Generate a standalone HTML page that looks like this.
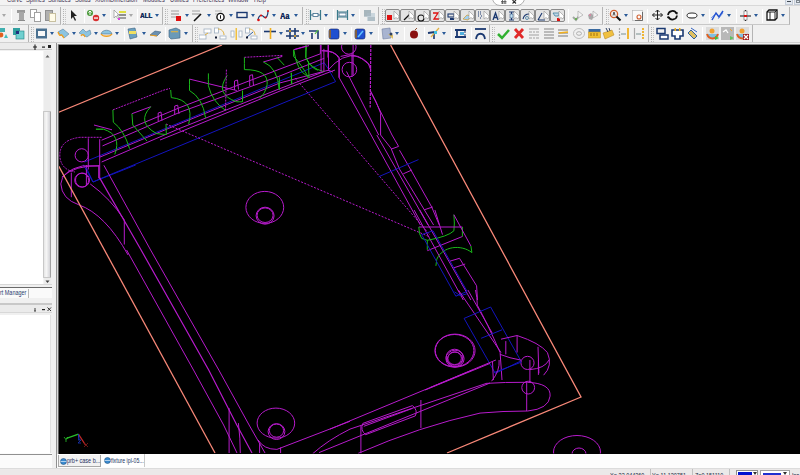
<!DOCTYPE html><html><head><meta charset="utf-8"><style>
*{margin:0;padding:0;box-sizing:border-box}
html,body{width:800px;height:475px;overflow:hidden}
body{position:relative;background:#f0f0f0;font-family:"Liberation Sans",sans-serif}
.a{position:absolute}
.sep{position:absolute;width:1px;background:#c8c8c8;border-right:1px solid #fff}
.tb{position:absolute;background:#f0f0f0;border-bottom:1px solid #c8c8c8}
.grip{position:absolute;width:4px;background-image:linear-gradient(#f0f0f0 50%,transparent 50%),linear-gradient(90deg,#b4b4b4 1px,transparent 1px,transparent 2px,#c4c4c4 2px,#c4c4c4 3px,transparent 3px);background-size:4px 2px,4px 2px}
.arr{position:absolute;width:0;height:0;border-left:2.5px solid transparent;border-right:2.5px solid transparent;border-top:3.5px solid #2a5a98}
.arrg{position:absolute;width:0;height:0;border-left:2.5px solid transparent;border-right:2.5px solid transparent;border-top:3.5px solid #a8a8a8}
.pb{position:absolute;top:9px;width:15px;height:13px;border:1px solid #8a8a8a;border-radius:2px;background:#e4e4e4}
</style></head><body>
<div class="a" style="left:0;top:0;width:800px;height:6px;background:#f3f3f3;border-bottom:1px solid #d8d8d8"></div>
<div class="a" style="left:0;top:0;width:800px;height:6px;overflow:hidden">
<div class="a" style="left:-3px;top:-5px;font-size:8px;line-height:9px;color:#3c3050;white-space:nowrap;transform:scaleX(0.72);transform-origin:0 0">r</div>
<div class="a" style="left:7px;top:-5px;font-size:8px;line-height:9px;color:#3c3050;white-space:nowrap;transform:scaleX(0.72);transform-origin:0 0">Curve</div>
<div class="a" style="left:26px;top:-5px;font-size:8px;line-height:9px;color:#3c3050;white-space:nowrap;transform:scaleX(0.72);transform-origin:0 0">Splines</div>
<div class="a" style="left:48px;top:-5px;font-size:8px;line-height:9px;color:#3c3050;white-space:nowrap;transform:scaleX(0.72);transform-origin:0 0">Surfaces</div>
<div class="a" style="left:75px;top:-5px;font-size:8px;line-height:9px;color:#3c3050;white-space:nowrap;transform:scaleX(0.72);transform-origin:0 0">Solids</div>
<div class="a" style="left:95px;top:-5px;font-size:8px;line-height:9px;color:#3c3050;white-space:nowrap;transform:scaleX(0.72);transform-origin:0 0">Xform</div>
<div class="a" style="left:110px;top:-5px;font-size:8px;line-height:9px;color:#3c3050;white-space:nowrap;transform:scaleX(0.72);transform-origin:0 0">Dimension</div>
<div class="a" style="left:143px;top:-5px;font-size:8px;line-height:9px;color:#3c3050;white-space:nowrap;transform:scaleX(0.72);transform-origin:0 0">Modules</div>
<div class="a" style="left:170px;top:-5px;font-size:8px;line-height:9px;color:#3c3050;white-space:nowrap;transform:scaleX(0.72);transform-origin:0 0">Utilities</div>
<div class="a" style="left:193px;top:-5px;font-size:8px;line-height:9px;color:#3c3050;white-space:nowrap;transform:scaleX(0.72);transform-origin:0 0">Preferences</div>
<div class="a" style="left:228px;top:-5px;font-size:8px;line-height:9px;color:#3c3050;white-space:nowrap;transform:scaleX(0.72);transform-origin:0 0">Window</div>
<div class="a" style="left:254px;top:-5px;font-size:8px;line-height:9px;color:#3c3050;white-space:nowrap;transform:scaleX(0.72);transform-origin:0 0">Help</div>
</div>
<div class="a" style="left:785px;top:-1px;width:8px;height:6px;background:#e2e8f0;border:1px solid #c4ccd8"></div>
<div class="a" style="left:787px;top:1px;width:4px;height:1px;background:#404850"></div>
<div class="a" style="left:794px;top:-1px;width:8px;height:6px;background:#e2e8f0;border:1px solid #c4ccd8"></div>
<div class="a" style="left:796px;top:0px;width:4px;height:3px;border:1px solid #808890"></div>
<div class="a" style="left:492px;top:-6px;width:33px;height:12px;background:#fff;border:1px solid #b0b0b0;border-radius:0 0 8px 8px"></div>
<svg class="a" style="left:500px;top:0px" width="20" height="6" viewBox="0 0 20 6"><path d="M2.5 0 V4 M5 0 V4 M1 1.5 H6.5 M1 3 H6.5" stroke="#505050" stroke-width="0.8"/><path d="M12.5 0 L16 3.5 M16 0 L12.5 3.5" stroke="#303030" stroke-width="1.1"/></svg>
<div class="tb" style="left:0px;top:7px;width:61px;height:18px;border-right:1px solid #b4b4b4"></div>
<div class="tb" style="left:62px;top:7px;width:101px;height:18px;border-right:1px solid #b4b4b4"></div>
<div class="tb" style="left:164px;top:7px;width:139px;height:18px;border-right:1px solid #b4b4b4"></div>
<div class="tb" style="left:304px;top:7px;width:75px;height:18px;border-right:1px solid #b4b4b4"></div>
<div class="tb" style="left:380px;top:7px;width:223px;height:18px;border-right:1px solid #b4b4b4"></div>
<div class="tb" style="left:604px;top:7px;width:186px;height:18px;border-right:1px solid #b4b4b4"></div>
<div class="tb" style="left:0px;top:25px;width:29px;height:18px;border-right:1px solid #b4b4b4"></div>
<div class="tb" style="left:30px;top:25px;width:163px;height:18px;border-right:1px solid #b4b4b4"></div>
<div class="tb" style="left:194px;top:25px;width:296px;height:18px;border-right:1px solid #b4b4b4"></div>
<div class="tb" style="left:491px;top:25px;width:158px;height:18px;border-right:1px solid #b4b4b4"></div>
<div class="tb" style="left:650px;top:25px;width:103px;height:18px;border-right:1px solid #b4b4b4"></div>
<div class="grip" style="left:63px;top:8px;height:16px"></div>
<div class="grip" style="left:165px;top:8px;height:16px"></div>
<div class="grip" style="left:306px;top:8px;height:16px"></div>
<div class="grip" style="left:382px;top:8px;height:16px"></div>
<div class="grip" style="left:606px;top:8px;height:16px"></div>
<div class="grip" style="left:31px;top:26px;height:16px"></div>
<div class="grip" style="left:195px;top:26px;height:16px"></div>
<div class="grip" style="left:492px;top:26px;height:16px"></div>
<div class="grip" style="left:651px;top:26px;height:16px"></div>
<div class="sep" style="left:11px;top:9px;height:14px"></div>
<div class="sep" style="left:84px;top:9px;height:14px"></div>
<div class="sep" style="left:110px;top:9px;height:14px"></div>
<div class="sep" style="left:137px;top:9px;height:14px"></div>
<div class="sep" style="left:333px;top:9px;height:14px"></div>
<div class="sep" style="left:359px;top:9px;height:14px"></div>
<div class="sep" style="left:647px;top:9px;height:14px"></div>
<div class="sep" style="left:682px;top:9px;height:14px"></div>
<div class="sep" style="left:709px;top:9px;height:14px"></div>
<div class="sep" style="left:736px;top:9px;height:14px"></div>
<div class="sep" style="left:762px;top:9px;height:14px"></div>
<div class="sep" style="left:124px;top:27px;height:14px"></div>
<div class="sep" style="left:165px;top:27px;height:14px"></div>
<div class="sep" style="left:261px;top:27px;height:14px"></div>
<div class="sep" style="left:324px;top:27px;height:14px"></div>
<div class="sep" style="left:351px;top:27px;height:14px"></div>
<div class="sep" style="left:378px;top:27px;height:14px"></div>
<div class="sep" style="left:404px;top:27px;height:14px"></div>
<div class="sep" style="left:424px;top:27px;height:14px"></div>
<div class="sep" style="left:451px;top:27px;height:14px"></div>
<div class="sep" style="left:471px;top:27px;height:14px"></div>
<div class="sep" style="left:568px;top:9px;height:14px"></div>
<div class="sep" style="left:702px;top:27px;height:14px"></div>
<div class="arrg" style="left:2.0px;top:14px"></div>
<svg class="a" style="left:16px;top:9px;" width="10" height="13" viewBox="0 0 10 13"><rect x="1" y="1" width="8" height="3" fill="#9a9a9a"/><rect x="3" y="3" width="5" height="9" fill="#a8a8a8"/><rect x="2" y="11" width="7" height="1" fill="#8a8a8a"/></svg>
<svg class="a" style="left:30px;top:9px;" width="11" height="13" viewBox="0 0 11 13"><rect x="0.5" y="0.5" width="6" height="8" fill="#fff" stroke="#a0a0a0"/><rect x="4.5" y="3.5" width="6" height="9" fill="#fff" stroke="#a0a0a0"/></svg>
<svg class="a" style="left:45px;top:9px;" width="11" height="13" viewBox="0 0 11 13"><rect x="0.5" y="1.5" width="7" height="10" fill="#b0b0b0" stroke="#909090"/><rect x="4.5" y="4.5" width="6" height="8" fill="#fffbe8" stroke="#c8c0a0"/></svg>
<svg class="a" style="left:70px;top:10px;" width="8" height="11" viewBox="0 0 8 11"><path d="M1 0 L1 9 L3 7 L5 11 L6 10 L4 6 L7 6 Z" fill="#202020"/></svg>
<svg class="a" style="left:86px;top:9px;" width="14" height="13" viewBox="0 0 14 13"><circle cx="4" cy="4" r="3" fill="#4a9a3a"/><path d="M4 2 L4 6 M2.5 3.5 L4 2 L5.5 3.5" stroke="#fff" fill="none"/><circle cx="10" cy="9" r="3.2" fill="#d83030"/><rect x="8" y="8.4" width="4" height="1.3" fill="#fff"/></svg>
<div class="arr" style="left:102.0px;top:14px"></div>
<svg class="a" style="left:113px;top:9px;" width="14" height="13" viewBox="0 0 14 13"><path d="M1 1 L1 9 L3 7 L5 10 L6 9 L4 6 L6 6 Z" fill="#fff" stroke="#808080" stroke-width="0.6"/><rect x="6" y="2" width="7" height="2" fill="#e0e040"/><rect x="6" y="5" width="7" height="2" fill="#909090"/><rect x="6" y="8" width="7" height="2" fill="#a0a0a0"/><rect x="5" y="9" width="2" height="2" fill="#e040e0"/></svg>
<div class="arrg" style="left:128.5px;top:14px"></div>
<div class="a" style="left:140px;top:11px;font-size:8px;line-height:10px;font-weight:bold;color:#10285a;text-shadow:0.4px 0 0 #10285a;transform:scaleX(0.78);transform-origin:0 0">ALL</div>
<div class="arr" style="left:155.0px;top:14px"></div>
<svg class="a" style="left:170px;top:9px;" width="13" height="13" viewBox="0 0 13 13"><rect x="1" y="1" width="8" height="2" fill="#c8c8c8"/><rect x="1" y="4" width="8" height="2" fill="#c0c0c0"/><rect x="1" y="7" width="8" height="2" fill="#c8c8c8"/><rect x="6" y="7" width="5" height="5" fill="#e01010"/></svg>
<div class="arr" style="left:185.0px;top:14px"></div>
<svg class="a" style="left:192px;top:9px;" width="10" height="13" viewBox="0 0 10 13"><rect x="0" y="1" width="8" height="2" fill="#c8c8c8"/><rect x="0" y="4" width="8" height="2" fill="#c0c0c0"/><path d="M2 12 L9 5" stroke="#101010" stroke-width="1.6"/></svg>
<div class="arr" style="left:206.5px;top:14px"></div>
<svg class="a" style="left:214px;top:9px;" width="12" height="13" viewBox="0 0 12 13"><rect x="1" y="1" width="7" height="2" fill="#d0d0d0"/><rect x="1" y="4" width="7" height="2" fill="#d0d0d0"/><circle cx="6.5" cy="8" r="3.6" fill="#fff" stroke="#101010" stroke-width="1.4"/><path d="M6.5 6.3 L6.5 9.7" stroke="#101010"/></svg>
<div class="arr" style="left:228.5px;top:14px"></div>
<svg class="a" style="left:236px;top:10px;" width="12" height="11" viewBox="0 0 12 11"><rect x="1" y="2.5" width="10" height="5" fill="none" stroke="#1a3870" stroke-width="1.4"/></svg>
<div class="arr" style="left:250.5px;top:14px"></div>
<svg class="a" style="left:257px;top:9px;" width="13" height="13" viewBox="0 0 13 13"><path d="M1 11 C2 5 5 6 7 8 C9 10 11 7 11 2" stroke="#1a3870" stroke-width="1.2" fill="none"/><circle cx="1.5" cy="11" r="1.3" fill="#e01010"/><circle cx="4" cy="6.5" r="1.1" fill="#e01010"/><circle cx="8.5" cy="8.5" r="1.1" fill="#e01010"/><circle cx="11" cy="2" r="1.1" fill="#e01010"/></svg>
<div class="arr" style="left:272.0px;top:14px"></div>
<div class="a" style="left:280px;top:11px;font-size:8.5px;line-height:10px;font-weight:bold;color:#10285a;text-shadow:0.4px 0 0 #10285a;transform:scaleX(0.85);transform-origin:0 0">Aa</div>
<div class="arr" style="left:294.0px;top:14px"></div>
<svg class="a" style="left:309px;top:9px;" width="13" height="13" viewBox="0 0 13 13"><path d="M1.5 1 L1.5 11 M11.5 1 L11.5 11" stroke="#3a7a8a" stroke-width="1.2"/><rect x="4" y="4.5" width="5" height="3" fill="#fff" stroke="#3a6a8a" stroke-width="0.8"/><path d="M1.5 6 L4 6 M9 6 L11.5 6" stroke="#3a6a8a"/></svg>
<div class="arr" style="left:324.0px;top:14px"></div>
<svg class="a" style="left:336px;top:9px;" width="13" height="13" viewBox="0 0 13 13"><path d="M1.5 1 L1.5 11 M11.5 1 L11.5 11 M1.5 3 L11.5 3 M1.5 8 L11.5 8" stroke="#3a7a8a" stroke-width="1.2"/><rect x="3" y="4" width="7" height="3" fill="#fff" stroke="#3a6a8a" stroke-width="0.8"/></svg>
<div class="arr" style="left:351.0px;top:14px"></div>
<svg class="a" style="left:363px;top:9px;" width="13" height="13" viewBox="0 0 13 13"><rect x="1" y="1" width="7" height="7" fill="#a8b8c0" opacity="0.7"/><rect x="4" y="4" width="8" height="8" fill="#c0d0d8" opacity="0.8"/><path d="M1 2h7M1 4h7M1 6h7M5 9h7M5 11h7" stroke="#708890" stroke-width="0.6"/></svg>
<div class="pb" style="left:385px"></div>
<svg class="a" style="left:386px;top:10px;" width="14" height="12" viewBox="0 0 14 12"><rect x="1" y="5" width="5" height="5" fill="#e01010"/><path d="M8 1 L8 9 L10 7.5 L12 9 L13 6 Z" fill="#fff" stroke="#909090" stroke-width="0.6"/></svg>
<div class="pb" style="left:400px"></div>
<svg class="a" style="left:401px;top:10px;" width="14" height="12" viewBox="0 0 14 12"><path d="M3 10 L9 4" stroke="#101010" stroke-width="1.3"/><path d="M8 1 L8 9 L10 7.5 L12 9 L13 6 Z" fill="#fff" stroke="#909090" stroke-width="0.6"/></svg>
<div class="pb" style="left:415px"></div>
<svg class="a" style="left:416px;top:10px;" width="14" height="12" viewBox="0 0 14 12"><circle cx="5" cy="8" r="3" fill="none" stroke="#101010" stroke-width="1.1"/><path d="M8 1 L8 9 L10 7.5 L12 9 L13 6 Z" fill="#fff" stroke="#909090" stroke-width="0.6"/></svg>
<div class="pb" style="left:430px"></div>
<svg class="a" style="left:431px;top:10px;" width="14" height="12" viewBox="0 0 14 12"><path d="M2 3 L7 3 L3 9 L8 9" stroke="#e01010" stroke-width="1.3" fill="none"/><path d="M8 1 L8 9 L10 7.5 L12 9 L13 6 Z" fill="#fff" stroke="#909090" stroke-width="0.6"/></svg>
<div class="pb" style="left:445px"></div>
<svg class="a" style="left:446px;top:10px;" width="14" height="12" viewBox="0 0 14 12"><rect x="2" y="4" width="6" height="3" fill="none" stroke="#1a3870" stroke-width="1.1"/><rect x="4" y="8" width="4" height="2" fill="#1a3870"/><path d="M8 1 L8 9 L10 7.5 L12 9 L13 6 Z" fill="#fff" stroke="#909090" stroke-width="0.6"/></svg>
<div class="pb" style="left:460px"></div>
<svg class="a" style="left:461px;top:10px;" width="14" height="12" viewBox="0 0 14 12"><path d="M2 9 L6 5 L10 6 L7 10 Z" fill="#a0d0f0" stroke="#d0a040" stroke-width="0.8"/><path d="M8 1 L8 9 L10 7.5 L12 9 L13 6 Z" fill="#fff" stroke="#909090" stroke-width="0.6"/></svg>
<div class="pb" style="left:475px"></div>
<svg class="a" style="left:476px;top:10px;" width="14" height="12" viewBox="0 0 14 12"><path d="M2 2h1M4 2h1M2 4h1M4 4h1M2 6h1M5 6h1M4 8h1" stroke="#1a3870" stroke-width="1.1"/><path d="M8 1 L8 9 L10 7.5 L12 9 L13 6 Z" fill="#fff" stroke="#909090" stroke-width="0.6"/></svg>
<div class="pb" style="left:490px"></div>
<svg class="a" style="left:491px;top:10px;" width="14" height="12" viewBox="0 0 14 12"><path d="M2 10 L4.5 3 L7 10 M3 7.5 L6 7.5" stroke="#1a3870" stroke-width="1.3" fill="none"/><path d="M8 1 L8 9 L10 7.5 L12 9 L13 6 Z" fill="#fff" stroke="#909090" stroke-width="0.6"/></svg>
<div class="pb" style="left:505px"></div>
<svg class="a" style="left:506px;top:10px;" width="14" height="12" viewBox="0 0 14 12"><path d="M3 2h5M5.5 2v8M3 10h5" stroke="#1a3870" stroke-width="1.1"/><rect x="4" y="4" width="3" height="4" fill="#c0e0f0" stroke="#1a3870" stroke-width="0.5"/><path d="M8 1 L8 9 L10 7.5 L12 9 L13 6 Z" fill="#fff" stroke="#909090" stroke-width="0.6"/></svg>
<div class="pb" style="left:520px"></div>
<svg class="a" style="left:521px;top:10px;" width="14" height="12" viewBox="0 0 14 12"><path d="M2 9 C3 5 6 4 8 4" stroke="#1a3870" stroke-width="1.1" fill="none"/><circle cx="6" cy="8" r="1.5" fill="none" stroke="#6090b0"/><path d="M8 1 L8 9 L10 7.5 L12 9 L13 6 Z" fill="#fff" stroke="#909090" stroke-width="0.6"/></svg>
<div class="pb" style="left:535px"></div>
<svg class="a" style="left:536px;top:10px;" width="14" height="12" viewBox="0 0 14 12"><path d="M2 10 L6 3 M2 10 L9 10" stroke="#1a3870" stroke-width="1.1" fill="none"/><path d="M8 1 L8 9 L10 7.5 L12 9 L13 6 Z" fill="#fff" stroke="#909090" stroke-width="0.6"/></svg>
<div class="pb" style="left:550px"></div>
<svg class="a" style="left:551px;top:10px;" width="14" height="12" viewBox="0 0 14 12"><path d="M2 3 L9 3 L7 6 L4 6 Z" fill="#c0d8e8" stroke="#4080a0" stroke-width="0.8"/><rect x="6" y="8" width="3" height="3" fill="#e01010"/><path d="M8 1 L8 9 L10 7.5 L12 9 L13 6 Z" fill="#fff" stroke="#909090" stroke-width="0.6"/></svg>
<svg class="a" style="left:572px;top:9px;" width="12" height="13" viewBox="0 0 12 13"><path d="M1 8 L4 11 L7 7" stroke="#a0a8a0" stroke-width="2" fill="none"/><circle cx="4" cy="10" r="1" fill="#5ab040"/><path d="M6 2 L6 9 L11 6 Z" fill="#f4f4f4" stroke="#a0a0a0" stroke-width="0.6"/></svg>
<svg class="a" style="left:587px;top:9px;" width="12" height="13" viewBox="0 0 12 13"><path d="M1 6 L4 4 L7 7 L5 11 L2 10 Z" fill="#a8a8a8"/><circle cx="3" cy="6" r="1" fill="#e080a0"/><path d="M6 2 L6 9 L11 6 Z" fill="#f4f4f4" stroke="#a0a0a0" stroke-width="0.6"/></svg>
<svg class="a" style="left:609px;top:9px;" width="13" height="13" viewBox="0 0 13 13"><circle cx="5" cy="5" r="3.6" fill="#f0f0f0" stroke="#d06030" stroke-width="1.3"/><path d="M7.5 7.5 L11.5 11.5" stroke="#101010" stroke-width="2"/><path d="M4 6.5 L5 3 L6 6.5" stroke="#303030" stroke-width="0.8" fill="none"/></svg>
<div class="arr" style="left:623.5px;top:14px"></div>
<svg class="a" style="left:632px;top:9px;" width="12" height="13" viewBox="0 0 12 13"><rect x="0.5" y="1.5" width="10" height="10" fill="#fafafa" stroke="#b0b0b0" stroke-width="0.6"/><path d="M10.5 3 L10.5 11.5 L3 11.5" stroke="#505050" stroke-width="0.8" fill="none"/><circle cx="7" cy="8" r="2" fill="none" stroke="#d06030" stroke-width="1.1"/></svg>
<svg class="a" style="left:652px;top:9px;" width="11" height="13" viewBox="0 0 11 13"><path d="M5.5 1 L5.5 11 M0.5 6 L10.5 6" stroke="#202020" stroke-width="1"/><path d="M3.5 3 L5.5 1 L7.5 3 M3.5 9 L5.5 11 L7.5 9 M2.5 4 L0.5 6 L2.5 8 M8.5 4 L10.5 6 L8.5 8" stroke="#202020" stroke-width="1" fill="none"/></svg>
<svg class="a" style="left:666px;top:9px;" width="13" height="13" viewBox="0 0 13 13"><path d="M2 6 A4.5 4.5 0 0 1 10.5 4.5" stroke="#101010" stroke-width="1.7" fill="none"/><path d="M11 6.5 A4.5 4.5 0 0 1 2.5 8" stroke="#101010" stroke-width="1.7" fill="none"/><path d="M9 3 L12 3.5 L11 6 Z M4 9.5 L1 9 L2 6.5 Z" fill="#101010"/></svg>
<svg class="a" style="left:686px;top:9px;" width="12" height="13" viewBox="0 0 12 13"><ellipse cx="6" cy="6.5" rx="5" ry="2.5" fill="#fff" stroke="#101010" stroke-width="0.9"/><path d="M3 9 L9 9" stroke="#606060" stroke-width="0.5"/></svg>
<div class="arr" style="left:700.5px;top:14px"></div>
<svg class="a" style="left:711px;top:9px;" width="13" height="13" viewBox="0 0 13 13"><path d="M1 11 L5 4 L8 8 L12 2" stroke="#2050d0" stroke-width="1.5" fill="none"/><path d="M0 9 L4 5 M7 10 L12 4" stroke="#4070e0" stroke-width="0.6"/></svg>
<div class="arr" style="left:727.0px;top:14px"></div>
<svg class="a" style="left:739px;top:9px;" width="13" height="13" viewBox="0 0 13 13"><path d="M6.5 1 L6.5 12 M1 7 L12 7" stroke="#101010" stroke-width="1.2"/><rect x="5" y="2" width="3" height="9" fill="#fff" stroke="#606060" stroke-width="0.6"/><rect x="5" y="6" width="3" height="2" fill="#e01010"/></svg>
<div class="arr" style="left:754.0px;top:14px"></div>
<svg class="a" style="left:765px;top:9px;" width="13" height="13" viewBox="0 0 13 13"><path d="M2 3 L4 1 L12 1 L12 9 L10 11 L2 11 Z" fill="#fff" stroke="#101010" stroke-width="1.3"/><path d="M2 3 L10 3 L10 11 M10 3 L12 1 M5 3 L5 11" stroke="#101010" stroke-width="0.9" fill="none"/></svg>
<div class="arr" style="left:780.5px;top:14px"></div>
<svg class="a" style="left:0px;top:27px;" width="9" height="13" viewBox="0 0 9 13"><rect x="0" y="1" width="5" height="4" fill="#40b0b0"/><circle cx="1" cy="8" r="2.4" fill="#e06020"/><path d="M4 11 L6 7 L8 11 Z" fill="#40c0c0"/></svg>
<svg class="a" style="left:12px;top:27px;" width="13" height="13" viewBox="0 0 13 13"><rect x="1" y="1" width="7" height="7" fill="#30a0a0"/><rect x="4" y="4" width="8" height="8" fill="#70d0d0" stroke="#208080" stroke-width="0.6"/><rect x="4" y="4" width="3" height="3" fill="#203080"/></svg>
<svg class="a" style="left:35px;top:27px;" width="13" height="13" viewBox="0 0 13 13"><rect x="1" y="1.5" width="11" height="10" fill="#4a7090"/><rect x="3" y="4" width="7" height="5" fill="#f8f8f8"/></svg>
<div class="arr" style="left:50.0px;top:32px"></div>
<svg class="a" style="left:57px;top:27px;" width="13" height="13" viewBox="0 0 13 13"><path d="M1 5 L6 2 L12 7 L7 11 Z" fill="#8cc4e0" stroke="#4a7090" stroke-width="0.5"/><path d="M1 5 C2 8 3 9 4 8 C5 7 6 10 7 11" stroke="#f0a020" stroke-width="1.3" fill="none"/></svg>
<div class="arr" style="left:71.5px;top:32px"></div>
<svg class="a" style="left:78px;top:27px;" width="14" height="13" viewBox="0 0 14 13"><path d="M1 6 L5 2 L8 5 L12 3 L13 7 L9 10 Z" fill="#8cc4e0" stroke="#4a7090" stroke-width="0.5"/><path d="M3 9 C4 7 6 7 7 10" stroke="#f0a020" stroke-width="1.3" fill="none"/></svg>
<div class="arr" style="left:93.5px;top:32px"></div>
<svg class="a" style="left:100px;top:27px;" width="13" height="13" viewBox="0 0 13 13"><path d="M1 7 C2 2 11 2 12 7 Z" fill="#8cc4e0" stroke="#4a7090" stroke-width="0.6"/><path d="M1 7 C3 10 10 10 12 7" stroke="#f0a020" stroke-width="1.3" fill="none"/></svg>
<div class="arr" style="left:115.0px;top:32px"></div>
<svg class="a" style="left:127px;top:27px;" width="12" height="13" viewBox="0 0 12 13"><path d="M1 2 L8 1 L10 10 L3 12 Z" fill="#6aa0c0" stroke="#3a6080" stroke-width="0.6"/><rect x="2" y="4" width="7" height="3" fill="#f0e060"/></svg>
<div class="arr" style="left:142.0px;top:32px"></div>
<svg class="a" style="left:149px;top:27px;" width="13" height="13" viewBox="0 0 13 13"><path d="M1 8 L6 4 L12 5 L8 9 Z" fill="#6a90b0" stroke="#3a6080" stroke-width="0.6"/><path d="M1 8 L8 9" stroke="#f0a020" stroke-width="1.2"/></svg>
<svg class="a" style="left:168px;top:27px;" width="14" height="13" viewBox="0 0 14 13"><path d="M1 3 L8 1 L12 3 L12 11 L3 12 L1 10 Z" fill="#6a9ab8" stroke="#3a6080" stroke-width="0.6"/><rect x="3" y="4" width="7" height="1.3" fill="#d0b050"/></svg>
<div class="arr" style="left:183.5px;top:32px"></div>
<svg class="a" style="left:199px;top:27px;" width="13" height="13" viewBox="0 0 13 13"><rect x="5" y="2" width="7" height="4" fill="#fff" stroke="#a0b0c0" stroke-width="0.8"/><rect x="0" y="8" width="7" height="4" fill="#fff" stroke="#a0b0c0" stroke-width="0.8"/><path d="M6 8 L9 6" stroke="#e0b040"/></svg>
<svg class="a" style="left:214px;top:27px;" width="13" height="13" viewBox="0 0 13 13"><rect x="0.5" y="1" width="4" height="5" fill="#fff" stroke="#a0b0c0" stroke-width="0.8"/><path d="M4 2 C8 2 10 5 10 8" stroke="#e0b040" fill="none"/><rect x="1" y="9.5" width="2" height="2" fill="#101830"/><rect x="6" y="9" width="6" height="3" fill="#fff" stroke="#a0b0c0" stroke-width="0.8"/></svg>
<svg class="a" style="left:230px;top:27px;" width="13" height="13" viewBox="0 0 13 13"><rect x="1" y="4" width="3" height="6" fill="#fff" stroke="#a0b0c0" stroke-width="0.8"/><rect x="5.5" y="1" width="1.5" height="12" fill="#f0c040"/><rect x="9" y="4" width="3" height="6" fill="#fff" stroke="#a0b0c0" stroke-width="0.8"/></svg>
<svg class="a" style="left:245px;top:27px;" width="13" height="13" viewBox="0 0 13 13"><rect x="0.5" y="1" width="4" height="5" fill="#fff" stroke="#a0b0c0" stroke-width="0.8"/><path d="M4 2 C8 2 10 5 10 8" stroke="#e0b040" fill="none"/><path d="M2 10 L8 5" stroke="#3060a0"/><rect x="1" y="9.5" width="2" height="2" fill="#101830"/><rect x="6" y="9" width="6" height="3" fill="#fff" stroke="#a0b0c0" stroke-width="0.8"/></svg>
<svg class="a" style="left:264px;top:27px;" width="13" height="13" viewBox="0 0 13 13"><path d="M0 4.5 L12 4.5" stroke="#1a3870" stroke-width="1.6"/><path d="M6.5 1 L6.5 12" stroke="#f0b020" stroke-width="1.6"/></svg>
<div class="arr" style="left:279.0px;top:32px"></div>
<svg class="a" style="left:286px;top:27px;" width="13" height="13" viewBox="0 0 13 13"><path d="M0 4 L13 4 M0 9 L13 9" stroke="#1a3870" stroke-width="1.6"/><path d="M4 1 L4 12 M9 1 L9 12" stroke="#1a3870" stroke-width="1.6"/><circle cx="4" cy="4" r="1" fill="#f0b020"/><circle cx="9" cy="9" r="1" fill="#f0b020"/></svg>
<div class="arr" style="left:301.0px;top:32px"></div>
<svg class="a" style="left:308px;top:27px;" width="12" height="13" viewBox="0 0 12 13"><path d="M1 4 L10 4 L10 12" stroke="#1a3870" stroke-width="1.6" fill="none"/><path d="M4 6 L4 12" stroke="#1a3870" stroke-width="1.6"/><path d="M7 7 L10 3" stroke="#50c040" stroke-width="1.2"/></svg>
<svg class="a" style="left:328px;top:27px;" width="12" height="13" viewBox="0 0 12 13"><rect x="1" y="2" width="10" height="10" rx="2" fill="#2050d0" stroke="#102060" stroke-width="0.6"/><rect x="1" y="3" width="2" height="8" fill="#806040"/></svg>
<div class="arr" style="left:342.5px;top:32px"></div>
<svg class="a" style="left:354px;top:27px;" width="12" height="13" viewBox="0 0 12 13"><rect x="1" y="2" width="10" height="10" rx="2" fill="#2050d0" stroke="#102060" stroke-width="0.6"/><path d="M4 10 L9 4" stroke="#60c0ff" stroke-width="1.5"/><rect x="1" y="3" width="2" height="8" fill="#806040"/></svg>
<div class="arr" style="left:368.5px;top:32px"></div>
<svg class="a" style="left:381px;top:27px;" width="13" height="13" viewBox="0 0 13 13"><path d="M1 2 L9 1 L10 11 L2 12 Z" fill="#a8b4d0" stroke="#7080a0" stroke-width="0.6"/><path d="M7 7 L12 12 L12 8 Z" fill="#e0c060"/><circle cx="10" cy="7" r="1.5" fill="#304060"/></svg>
<div class="arr" style="left:394.5px;top:32px"></div>
<svg class="a" style="left:409px;top:27px;" width="10" height="13" viewBox="0 0 10 13"><circle cx="5" cy="7.5" r="4" fill="#8a1010"/><path d="M6 3 L8 1" stroke="#905030"/></svg>
<svg class="a" style="left:427px;top:27px;" width="13" height="13" viewBox="0 0 13 13"><path d="M1 6 L8 5" stroke="#1a3870" stroke-width="2"/><path d="M7 5 L7 12" stroke="#1a3870" stroke-width="1.6"/><path d="M4 10 L12 1" stroke="#e0b040" stroke-width="1.2"/><rect x="7" y="4" width="3" height="3" fill="#40c0e0"/></svg>
<div class="arr" style="left:442.0px;top:32px"></div>
<svg class="a" style="left:454px;top:27px;" width="13" height="13" viewBox="0 0 13 13"><path d="M1 3 L12 3 M1 10 L12 10" stroke="#1a3870" stroke-width="1.8"/><path d="M3 3 L3 10" stroke="#1a3870" stroke-width="1.8"/><rect x="6" y="5" width="4" height="3" fill="#50b0e0"/><path d="M10 5 L12 5 M10 8 L12 8" stroke="#1a3870"/></svg>
<svg class="a" style="left:474px;top:27px;" width="13" height="13" viewBox="0 0 13 13"><path d="M1 2 L12 2" stroke="#1a3870" stroke-width="1.8"/><path d="M2 12 C3 5 10 5 11 12" stroke="#1a3870" stroke-width="1.8" fill="none"/></svg>
<svg class="a" style="left:497px;top:27px;" width="13" height="13" viewBox="0 0 13 13"><path d="M1 7 L5 11 L12 3" stroke="#30b030" stroke-width="2.5" fill="none"/></svg>
<svg class="a" style="left:513px;top:27px;" width="12" height="13" viewBox="0 0 12 13"><path d="M2 2 L10 11 M10 2 L2 11" stroke="#e02828" stroke-width="2.8"/></svg>
<svg class="a" style="left:528px;top:27px;" width="12" height="13" viewBox="0 0 12 13"><path d="M1 2h10M1 5h3M5 5h2M8 5h3M1 8h10M1 11h3M5 11h2M8 11h3" stroke="#a0a0a0" stroke-width="1.2"/></svg>
<svg class="a" style="left:543px;top:27px;" width="12" height="13" viewBox="0 0 12 13"><path d="M1 2h10M1 5h10M1 8h10M1 11h10" stroke="#a8a8a8" stroke-width="1.6"/></svg>
<svg class="a" style="left:557px;top:27px;" width="13" height="13" viewBox="0 0 13 13"><path d="M1 3h10M1 6h10M1 9h10" stroke="#a0a0a0" stroke-width="1.6"/><path d="M2 6 L11 5" stroke="#f0b020" stroke-width="1.6"/></svg>
<svg class="a" style="left:572px;top:27px;" width="14" height="13" viewBox="0 0 14 13"><ellipse cx="7" cy="6.5" rx="5.5" ry="5" fill="none" stroke="#b0b0b0" stroke-width="0.8"/><ellipse cx="7" cy="6.5" rx="2.5" ry="1.8" fill="none" stroke="#a0a0a0" stroke-width="0.8"/></svg>
<svg class="a" style="left:588px;top:27px;" width="13" height="13" viewBox="0 0 13 13"><rect x="0.5" y="2" width="12" height="3" fill="#3a6aa0"/><rect x="0.5" y="5" width="12" height="6" fill="#f0c030" stroke="#c09020" stroke-width="0.5"/><path d="M3 6v3M6 6v3M9 6v3" stroke="#a07010"/></svg>
<svg class="a" style="left:602px;top:27px;" width="13" height="13" viewBox="0 0 13 13"><path d="M1 6 L10 3 L12 8 L3 12 Z" fill="#f0c040" stroke="#b08020" stroke-width="0.5"/><path d="M4 1 L6 5 M7 1 L8 4" stroke="#304060"/></svg>
<svg class="a" style="left:618px;top:27px;" width="12" height="13" viewBox="0 0 12 13"><path d="M1.5 1v11" stroke="#a8a8a8" stroke-width="1.2" stroke-dasharray="2 1"/><path d="M3 7 L8 7" stroke="#a0b0b0" stroke-width="1.5"/><path d="M10 1v11" stroke="#f0b020" stroke-width="1.8"/></svg>
<svg class="a" style="left:633px;top:27px;" width="12" height="13" viewBox="0 0 12 13"><path d="M1.5 1v11" stroke="#a8a8a8" stroke-width="1.2"/><path d="M3 7 L8 7" stroke="#a0b0b0" stroke-width="1.5"/><path d="M10 1v11" stroke="#f0b020" stroke-width="1.8" stroke-dasharray="2 1"/></svg>
<svg class="a" style="left:656px;top:27px;" width="13" height="13" viewBox="0 0 13 13"><rect x="1" y="1.5" width="8" height="5" fill="none" stroke="#1a3870" stroke-width="1.5"/><rect x="4" y="8" width="8" height="4" fill="#fff" stroke="#1a3870" stroke-width="1.5"/></svg>
<svg class="a" style="left:671px;top:27px;" width="13" height="13" viewBox="0 0 13 13"><path d="M1 3 L12 3 L12 9 L9 9 L9 12 L4 12 L4 9 L1 9 Z" fill="#fff" stroke="#1a3870" stroke-width="1.6"/><rect x="3.5" y="1" width="1.5" height="3" fill="#f0b020"/><rect x="8" y="1" width="1.5" height="3" fill="#f0b020"/></svg>
<svg class="a" style="left:686px;top:27px;" width="12" height="13" viewBox="0 0 12 13"><path d="M2 6 L8 12 L11 9 L5 3 Z" fill="#e0c060" stroke="#3060a0" stroke-width="1"/><path d="M5 1 L11 5" stroke="#3060c0"/></svg>
<svg class="a" style="left:706px;top:27px;" width="13" height="13" viewBox="0 0 13 13"><rect x="0" y="0" width="13" height="13" fill="#c8c8c8" opacity="0.5"/><circle cx="6" cy="4" r="2.5" fill="#f0a030"/><path d="M1 7 C3 13 10 13 12 7" stroke="#e06020" stroke-width="2" fill="#80c0e0"/><path d="M9 9 L13 11 L9 13 Z" fill="#40c040"/></svg>
<svg class="a" style="left:721px;top:27px;" width="13" height="13" viewBox="0 0 13 13"><rect x="0" y="0" width="13" height="13" fill="#b8b8b8"/><path d="M2 5 L5 3 L7 6" stroke="#fff" stroke-width="1.3" fill="none"/><path d="M9 9 L13 11 L9 13 Z" fill="#60c060"/><path d="M9 2 L11 4" stroke="#f0a030"/></svg>
<svg class="a" style="left:736px;top:27px;" width="13" height="13" viewBox="0 0 13 13"><rect x="0" y="0" width="13" height="13" fill="#c8c8c8" opacity="0.5"/><circle cx="6" cy="4" r="2.5" fill="#f0a030"/><path d="M1 7 C3 13 10 13 12 7" stroke="#e06020" stroke-width="2" fill="#80c0e0"/><rect x="7" y="7" width="6" height="6" fill="#a02020"/><path d="M8 8 L12 12 M12 8 L8 12" stroke="#fff" stroke-width="1.2"/></svg>
<div class="a" style="left:0;top:42px;width:800px;height:1px;background:#d0d0d0"></div>
<div class="a" style="left:0;top:43px;width:52px;height:7px;background:#ebebeb;border-bottom:1px solid #c8c8c8"></div>
<svg class="a" style="left:32px;top:44px;" width="20" height="6" viewBox="0 0 20 6"><path d="M3 0.5 L3 3 M1 3 L5 3 M3 3 L3 6" stroke="#202020" stroke-width="1.1"/><rect x="10" y="2.5" width="3" height="1.2" fill="#202020"/><rect x="16" y="1" width="3" height="3" fill="#202020"/></svg>
<div class="a" style="left:0;top:51px;width:44px;height:233px;background:#fff"></div>
<div class="a" style="left:43px;top:51px;width:8px;height:233px;background:#ececec;border-left:1px solid #f4f4f4"></div>
<div class="a" style="left:43px;top:111px;width:8px;height:167px;background:linear-gradient(90deg,#e6e6e6,#f6f6f6 40%,#d4d4d8);border:1px solid #c8c8c8;border-right-color:#a0a0a0;border-radius:1px"></div>
<svg class="a" style="left:45px;top:54px;" width="5" height="4" viewBox="0 0 5 4"><path d="M0.5 3.5 L2.5 1 L4.5 3.5" fill="#606060"/></svg>
<svg class="a" style="left:45px;top:280px;" width="5" height="4" viewBox="0 0 5 4"><path d="M0.5 0.5 L2.5 3 L4.5 0.5" fill="#404040"/></svg>
<div class="a" style="left:0;top:284px;width:52px;height:1px;background:#d8d8d8"></div>
<div class="a" style="left:0;top:287px;width:52px;height:1px;background:#6a6a6a"></div>
<div class="a" style="left:0;top:288px;width:52px;height:10px;background:#fafafa"></div>
<div class="a" style="left:0px;top:288px;font-size:8px;line-height:10px;color:#2a3a70;white-space:nowrap;transform:scaleX(0.68);transform-origin:0 0">rt Manager</div>
<div class="a" style="left:28px;top:289px;width:1px;height:9px;background:#b8b8b8"></div>
<div class="a" style="left:0;top:303px;width:52px;height:2px;background:#c8c8c8"></div>
<div class="a" style="left:0;top:305px;width:52px;height:8px;background:#ebebeb;border-bottom:1px solid #d8d8d8"></div>
<svg class="a" style="left:32px;top:306px;" width="20" height="7" viewBox="0 0 20 7"><path d="M3 2 L3 5 M2 5 L4 5" stroke="#404040" stroke-width="1"/><rect x="10" y="3" width="3" height="1.2" fill="#202020"/><path d="M15.5 1.5 L19 5 M19 1.5 L15.5 5" stroke="#303030" stroke-width="1"/></svg>
<div class="a" style="left:0;top:315px;width:51px;height:138px;background:#fff;border-right:1px solid #e0e0e0"></div>
<div class="a" style="left:0;top:453px;width:52px;height:15px;background:#fbfbfb"></div>
<div class="a" style="left:0;top:454px;width:52px;height:1px;background:#909090"></div>
<div class="a" style="left:56px;top:43px;width:1px;height:425px;background:#909090"></div>
<div class="a" style="left:57px;top:44px;width:1px;height:410px;background:#d8d8d8"></div>
<div class="a" style="left:58px;top:44px;width:742px;height:1px;background:#8a8a8a"></div>
<div class="a" style="left:58px;top:45px;width:1px;height:409px;background:#606060"></div>
<div class="a" style="left:59px;top:45px;width:741px;height:409px;background:#000"></div>
<div class="a" style="left:57px;top:454px;width:743px;height:14px;background:#fdfdfd"></div>
<div class="a" style="left:58px;top:455px;width:43px;height:12px;background:#f2f2f2;border:1px solid #a8a8a8;border-top:none"></div>
<div class="a" style="left:101px;top:454px;width:44px;height:13px;background:#fff;border-right:1px solid #c8c8c8"></div>
<svg class="a" style="left:60px;top:458px;" width="7" height="7" viewBox="0 0 7 7"><circle cx="3.5" cy="3.5" r="3" fill="#3a8ad0" stroke="#205080" stroke-width="0.6"/><path d="M0.5 3.5 L6.5 3.5" stroke="#fff" stroke-width="0.6"/></svg>
<svg class="a" style="left:104px;top:457px;" width="7" height="7" viewBox="0 0 7 7"><circle cx="3.5" cy="3.5" r="3" fill="#3a8ad0" stroke="#205080" stroke-width="0.6"/><path d="M0.5 3.5 L6.5 3.5" stroke="#fff" stroke-width="0.6"/></svg>
<div class="a" style="left:67px;top:457px;font-size:6.5px;line-height:8px;color:#203060;white-space:nowrap;transform:scaleX(0.84);transform-origin:0 0">prb+ case b...</div>
<div class="a" style="left:111px;top:457px;font-size:6.5px;line-height:8px;color:#203060;white-space:nowrap;transform:scaleX(0.8);transform-origin:0 0">fixture ipl-05...</div>
<div class="a" style="left:0;top:468px;width:800px;height:7px;background:#ebe9e9;border-top:1px solid #dcdcdc"></div>
<div class="a" style="left:0;top:468px;width:800px;height:7px;overflow:hidden">
<div class="a" style="left:610px;top:3px;font-size:8px;line-height:10px;color:#202840;white-space:nowrap;transform:scaleX(0.68);transform-origin:0 0">X=-23.044260</div>
<div class="a" style="left:652px;top:3px;font-size:8px;line-height:10px;color:#202840;white-space:nowrap;transform:scaleX(0.68);transform-origin:0 0">Y=-11.120751</div>
<div class="a" style="left:695px;top:3px;font-size:8px;line-height:10px;color:#202840;white-space:nowrap;transform:scaleX(0.68);transform-origin:0 0">Z=0.151110</div>
<div class="a" style="left:792px;top:3px;font-size:8px;line-height:10px;color:#202840;white-space:nowrap;transform:scaleX(0.68);transform-origin:0 0">Ins</div>
<div class="a" style="left:650px;top:1px;width:1px;height:6px;background:#c0c0c0"></div>
<div class="a" style="left:692px;top:1px;width:1px;height:6px;background:#c0c0c0"></div>
<div class="a" style="left:729px;top:1px;width:1px;height:6px;background:#c0c0c0"></div>
<div class="a" style="left:736px;top:2px;width:22px;height:7px;background:#fff;border:1px solid #909090"></div>
<div class="a" style="left:738px;top:4px;width:14px;height:4px;background:#0010d0"></div>
<div class="a" style="left:753px;top:4px;width:0;height:0;border-left:2px solid transparent;border-right:2px solid transparent;border-top:3px solid #303030"></div>
<div class="a" style="left:760px;top:2px;width:30px;height:7px;background:#fff;border:1px solid #a0a0a0"></div>
<div class="a" style="left:763px;top:5px;width:18px;height:2px;background:#2030d0"></div>
<div class="a" style="left:783px;top:4px;width:0;height:0;border-left:2px solid transparent;border-right:2px solid transparent;border-top:3px solid #303030"></div>
</div>
<svg class="a" style="left:0;top:0" width="800" height="475" viewBox="0 0 800 475"><defs><clipPath id="vp"><rect x="59" y="45" width="741" height="408.5"/></clipPath></defs><g clip-path="url(#vp)"><g opacity="0.85"><polyline points="101.6,140.2 180.0,107.5 280.0,69.0 320.4,53.8" fill="none" stroke="#d820f0" stroke-width="1"/><polyline points="102.5,145.9 180.0,112.2 280.0,75.9 324.2,58.3" fill="none" stroke="#d820f0" stroke-width="1"/><polyline points="99.7,157.2 180.0,123.6 280.0,82.9 328.0,70.3" fill="none" stroke="#d820f0" stroke-width="1"/><polyline points="101.6,162.0 180.0,128.3 280.0,88.6 324.2,71.5" fill="none" stroke="#d820f0" stroke-width="1"/><polyline points="160.0,140.0 180.0,132.0 280.0,91.0 335.0,70.0" fill="none" stroke="#d820f0" stroke-width="1"/><polyline points="84.5,162.0 324.2,62.7 328.0,68.4" fill="none" stroke="#1818e0" stroke-width="1"/><polyline points="93.0,182.0 99.7,179.0 280.0,104.3 335.6,81.6 328.0,68.4" fill="none" stroke="#1818e0" stroke-width="1"/><polyline points="83.3,164.7 93.0,182.0" fill="none" stroke="#1818e0" stroke-width="1"/><polyline points="166.0,124.0 430.0,237.0" fill="none" stroke="#d820f0" stroke-width="1" stroke-dasharray="2 1.5"/><polyline points="295.0,78.0 430.0,235.0" fill="none" stroke="#d820f0" stroke-width="1" stroke-dasharray="2 1.5"/><polyline points="112.9,109.9 164.0,90.0 170.0,88.5" fill="none" stroke="#d820f0" stroke-width="1" stroke-dasharray="2 1"/><path d="M112.9,109.9 L113.3,122.2 Q124,130 129.6,148.7" fill="none" stroke="#20d820" stroke-width="1"/><polyline points="131.9,113.7 150.8,106.7" fill="none" stroke="#d820f0" stroke-width="1"/><path d="M150.8,106.7 Q136,122 156.5,133.6 L166,134.5" fill="none" stroke="#20d820" stroke-width="1"/><polyline points="166.0,124.0 166.3,134.5" fill="none" stroke="#20d820" stroke-width="1"/><polyline points="131.9,113.7 132.8,125.0 147.0,141.1" fill="none" stroke="#20d820" stroke-width="1"/><path d="M170.7,90 L171.3,97.6 Q195,100 188.7,124" fill="none" stroke="#20d820" stroke-width="1"/><polyline points="94.0,125.0 112.0,129.8" fill="none" stroke="#d820f0" stroke-width="1"/><polyline points="95.9,129.2 103.5,129.2" fill="none" stroke="#20d820" stroke-width="1.3"/><path d="M103.5,129.2 Q122,135 114.8,154.4" fill="none" stroke="#20d820" stroke-width="1"/><path d="M101.6,137.3 L80,137.3 Q58,140 60,158 Q62,170 75,172" fill="none" stroke="#d820f0" stroke-width="1" stroke-dasharray="2 1"/><ellipse cx="81.7" cy="155.3" rx="6.6" ry="6.6" fill="none" stroke="#d820f0" stroke-width="1"/><polyline points="88.3,138.3 88.3,169.5" fill="none" stroke="#d820f0" stroke-width="1"/><polyline points="99.7,139.2 99.7,180.0" fill="none" stroke="#d820f0" stroke-width="1"/><path d="M61.8,177.1 Q75,165 99.7,165.8" fill="none" stroke="#d820f0" stroke-width="1"/><polyline points="189.5,79.1 236.8,90.5" fill="none" stroke="#d820f0" stroke-width="1"/><path d="M189.5,79.1 Q189.5,84.8 189.5,90.5 Q202.7,98.0 205.6,117.9" fill="none" stroke="#20d820" stroke-width="1"/><path d="M208.4,73.4 Q208.4,79.7 208.4,85.7 Q212.2,101.8 225.5,110.3" fill="none" stroke="#20d820" stroke-width="1"/><path d="M227.3,75.3 Q214.1,94.2 236.8,101.8 Q239.7,101.8 242.5,101.8" fill="none" stroke="#20d820" stroke-width="1"/><polyline points="226.4,69.6 225.5,110.3" fill="none" stroke="#d820f0" stroke-width="1" stroke-dasharray="2 1"/><polyline points="234.5,90.0 234.5,81.0 237.5,80.0 238.5,89.5" fill="none" stroke="#d820f0" stroke-width="1"/><polyline points="242.5,90.5 242.5,101.8" fill="none" stroke="#20d820" stroke-width="1"/><polyline points="244.4,57.3 282.3,55.4" fill="none" stroke="#d820f0" stroke-width="1" stroke-dasharray="2 1"/><path d="M244.4,57.3 Q244.4,63.6 244.4,69.6 Q269.0,69.6 267.1,84.8 Q265.2,94.2 259.5,98.0" fill="none" stroke="#20d820" stroke-width="1"/><polyline points="249.7,86.0 249.7,75.5 252.5,74.7 253.5,85.5" fill="none" stroke="#d820f0" stroke-width="1"/><polyline points="158.2,121.0 158.2,113.0 161.0,112.0 162.0,120.5" fill="none" stroke="#d820f0" stroke-width="1"/><polyline points="174.7,114.5 174.7,106.0 177.7,105.2 179.0,114.0" fill="none" stroke="#d820f0" stroke-width="1"/><polyline points="263.3,62.0 282.3,56.4" fill="none" stroke="#d820f0" stroke-width="1"/><polyline points="276.7,57.0 284.3,65.2" fill="none" stroke="#20d820" stroke-width="1"/><polyline points="291.2,72.8 291.9,84.1" fill="none" stroke="#20d820" stroke-width="1"/><path d="M263.5,62 Q278,68 279.2,89.8" fill="none" stroke="#20d820" stroke-width="1"/><polyline points="279.4,77.2 279.4,89.5" fill="none" stroke="#20d820" stroke-width="1"/><polyline points="293.6,49.7 306.9,45.9" fill="none" stroke="#d820f0" stroke-width="1"/><path d="M293.6,49.7 Q293.6,53.1 293.6,56.4 Q301.2,63.9 308.8,78.1" fill="none" stroke="#20d820" stroke-width="1"/><path d="M305.8,45 L305.8,57.6 Q310,68 323.4,71.5" fill="none" stroke="#20d820" stroke-width="1"/><polyline points="321.1,45.0 321.1,71.5" fill="none" stroke="#d820f0" stroke-width="1"/><polyline points="323.9,48.8 323.9,71.5" fill="none" stroke="#d820f0" stroke-width="1"/><path d="M328.0,70.3 Q330.5,70.9 333.0,72.1" fill="none" stroke="#d820f0" stroke-width="1"/><path d="M321.7,50.7 Q334.3,50.1 339.3,57.6" fill="none" stroke="#d820f0" stroke-width="1"/><polyline points="339.3,57.6 339.3,77.8" fill="none" stroke="#d820f0" stroke-width="1"/><path d="M340.6,56.4 Q355.8,51.3 368.4,63.9" fill="none" stroke="#d820f0" stroke-width="1"/><polyline points="368.4,63.9 370.9,70.3" fill="none" stroke="#d820f0" stroke-width="1"/><ellipse cx="349.4" cy="69.6" rx="7.3" ry="7.3" fill="none" stroke="#d820f0" stroke-width="1"/><ellipse cx="348.8" cy="46.9" rx="7.3" ry="7.3" fill="none" stroke="#d820f0" stroke-width="1"/><polyline points="352.0,52.6 352.0,76.6" fill="none" stroke="#d820f0" stroke-width="1"/><polyline points="328.0,45.0 328.0,57.6" fill="none" stroke="#d820f0" stroke-width="1"/><polyline points="320.4,45.0 320.4,53.8" fill="none" stroke="#d820f0" stroke-width="1"/><path d="M306.5,46.3 Q305.9,51.9 305.9,57.6 Q310.3,67.7 317.9,70.3" fill="none" stroke="#20d820" stroke-width="1"/><polyline points="308.4,61.4 309.0,77.8" fill="none" stroke="#20d820" stroke-width="1"/><path d="M293.9,50.1 Q296.4,70.3 307.8,76.6" fill="none" stroke="#20d820" stroke-width="1"/><polyline points="291.4,72.8 291.4,84.1" fill="none" stroke="#20d820" stroke-width="1"/><polyline points="295.2,49.4 309.0,45.6" fill="none" stroke="#d820f0" stroke-width="1"/><polyline points="370.8,45.0 370.2,107.5" fill="none" stroke="#d820f0" stroke-width="1.2" stroke-dasharray="3 1"/><path d="M370.2,90.5 Q376.8,101.8 380.6,113.2" fill="none" stroke="#d820f0" stroke-width="1"/><polyline points="380.6,113.2 380.6,135.0" fill="none" stroke="#d820f0" stroke-width="1"/><path d="M321.9,50.7 Q335.2,50.7 338.9,58.3" fill="none" stroke="#d820f0" stroke-width="1"/><polyline points="338.9,58.3 338.9,77.2" fill="none" stroke="#d820f0" stroke-width="1"/><polyline points="328.5,45.0 328.5,69.6" fill="none" stroke="#d820f0" stroke-width="1"/><polyline points="353.1,45.0 353.1,75.3" fill="none" stroke="#d820f0" stroke-width="1"/><path d="M327.6,70.6 Q342.7,52.6 357.9,56.4 Q370.2,62.0 370.8,68.7" fill="none" stroke="#d820f0" stroke-width="1"/><polyline points="338.9,77.2 371.1,135.0" fill="none" stroke="#d820f0" stroke-width="1"/><polyline points="346.5,71.5 378.7,135.0" fill="none" stroke="#d820f0" stroke-width="1"/><polyline points="370.2,90.5 392.0,135.0" fill="none" stroke="#d820f0" stroke-width="1"/><polyline points="371.1,135.0 420.4,225.0" fill="none" stroke="#d820f0" stroke-width="1"/><polyline points="376.8,135.0 428.0,225.0" fill="none" stroke="#d820f0" stroke-width="1"/><polyline points="380.6,135.0 391.0,148.3 399.5,169.1 433.6,225.0" fill="none" stroke="#d820f0" stroke-width="1"/><polyline points="392.0,135.0 398.6,146.4 391.0,149.2" fill="none" stroke="#d820f0" stroke-width="1"/><polyline points="399.5,150.2 410.9,170.0 431.7,207.0 439.3,225.0" fill="none" stroke="#d820f0" stroke-width="1"/><polyline points="403.3,173.8 411.9,170.0" fill="none" stroke="#d820f0" stroke-width="1"/><polyline points="424.2,209.8 432.7,207.0" fill="none" stroke="#d820f0" stroke-width="1"/><polyline points="378.7,176.7 418.5,159.6" fill="none" stroke="#1818e0" stroke-width="1"/><polyline points="414.1,210.0 463.3,300.0" fill="none" stroke="#d820f0" stroke-width="1"/><polyline points="419.8,210.0 470.9,300.0" fill="none" stroke="#d820f0" stroke-width="1"/><polyline points="434.9,210.0 442.5,234.6" fill="none" stroke="#d820f0" stroke-width="1"/><path d="M453.9,214.7 Q454.8,223.3 453.9,230.8 Q448.2,236.5 427.3,240.3" fill="none" stroke="#20d820" stroke-width="1"/><polyline points="427.3,240.3 427.3,249.8" fill="none" stroke="#20d820" stroke-width="1"/><polyline points="418.8,227.0 462.4,227.0" fill="none" stroke="#d820f0" stroke-width="1"/><path d="M418.8,227.0 Q418.8,234.6 421.7,238.4 Q424.5,239.4 427.3,240.3" fill="none" stroke="#20d820" stroke-width="1"/><polyline points="462.4,227.0 462.4,236.5" fill="none" stroke="#20d820" stroke-width="1"/><polyline points="427.3,250.7 462.4,236.5" fill="none" stroke="#d820f0" stroke-width="1"/><polyline points="453.9,214.7 470.9,246.0" fill="none" stroke="#d820f0" stroke-width="1"/><path d="M470.9,246.0 L471.9,252.6 C461.4,244.1 442.5,246.0 436.8,259.2 L435.9,265.9" fill="none" stroke="#20d820" stroke-width="1"/><polyline points="421.7,234.6 433.0,230.8 467.1,291.4 455.8,296.2 421.7,234.6" fill="none" stroke="#1818e0" stroke-width="1"/><polyline points="450.1,261.1 459.5,258.3 476.6,285.8 477.5,300.0" fill="none" stroke="#d820f0" stroke-width="1"/><polyline points="453.9,267.8 465.2,264.0" fill="none" stroke="#d820f0" stroke-width="1"/><polyline points="454.6,291.9 460.3,295.7 466.9,293.8" fill="none" stroke="#1818e0" stroke-width="1"/><polyline points="458.4,290.0 501.0,352.5" fill="none" stroke="#d820f0" stroke-width="1"/><polyline points="467.9,290.0 492.5,333.6" fill="none" stroke="#d820f0" stroke-width="1"/><path d="M475.5,290.0 Q477.3,297.6 477.3,305.2 Q486.8,322.2 500.1,352.5" fill="none" stroke="#d820f0" stroke-width="1"/><polyline points="500.1,352.5 502.0,380.0" fill="none" stroke="#d820f0" stroke-width="1"/><polyline points="464.1,318.4 490.6,307.0 520.9,361.0 495.3,373.3 464.1,318.4" fill="none" stroke="#1818e0" stroke-width="1"/><polyline points="481.1,338.3 502.0,329.8" fill="none" stroke="#1818e0" stroke-width="1"/><ellipse cx="454.6" cy="350.6" rx="19.3" ry="16.1" fill="none" stroke="#d820f0" stroke-width="1"/><ellipse cx="454.6" cy="357.2" rx="8.5" ry="8.0" fill="none" stroke="#d820f0" stroke-width="1"/><ellipse cx="454.6" cy="358.2" rx="6.8" ry="6.4" fill="none" stroke="#d820f0" stroke-width="1"/><polyline points="501.0,339.2 517.1,335.5" fill="none" stroke="#d820f0" stroke-width="1"/><path d="M517.1,335.5 Q539.8,343.0 547.4,352.5 Q553.1,365.8 543.6,375.2" fill="none" stroke="#d820f0" stroke-width="1"/><polyline points="505.8,341.1 505.8,354.4" fill="none" stroke="#d820f0" stroke-width="1"/><polyline points="517.1,335.5 517.1,352.5" fill="none" stroke="#d820f0" stroke-width="1"/><polyline points="538.0,346.8 538.9,373.3" fill="none" stroke="#d820f0" stroke-width="1"/><ellipse cx="527.5" cy="362.9" rx="6.6" ry="6.6" fill="none" stroke="#d820f0" stroke-width="1"/><path d="M500.1,354.4 Q509.5,358.2 520.9,360.1" fill="none" stroke="#d820f0" stroke-width="1"/><polyline points="492.5,362.0 493.4,380.0" fill="none" stroke="#d820f0" stroke-width="1"/><path d="M485.9,383.4 Q504.4,382.1 527.7,382.3" fill="none" stroke="#d820f0" stroke-width="1"/><path d="M527.7,382.3 Q551.1,383.4 550.1,396.1 Q549.0,408.9 527.7,411.0" fill="none" stroke="#d820f0" stroke-width="1"/><path d="M527.7,411.0 Q502.2,411.0 479.9,413.1" fill="none" stroke="#d820f0" stroke-width="1"/><polyline points="430.0,387.6 495.9,360.0" fill="none" stroke="#d820f0" stroke-width="1"/><polyline points="526.7,382.3 526.7,411.0" fill="none" stroke="#d820f0" stroke-width="1"/><ellipse cx="528.2" cy="387.6" rx="6.4" ry="6.4" fill="none" stroke="#d820f0" stroke-width="1"/><polyline points="529.9,360.0 529.9,382.3" fill="none" stroke="#d820f0" stroke-width="1"/><polyline points="538.4,360.0 538.4,374.9" fill="none" stroke="#d820f0" stroke-width="1"/><path d="M529.9,369.6 Q544.7,368.5 549.0,360.0" fill="none" stroke="#d820f0" stroke-width="1"/><polyline points="493.7,372.7 521.4,362.1" fill="none" stroke="#1818e0" stroke-width="1"/><path d="M491.6,381.2 Q500.1,370.6 499.1,360.0" fill="none" stroke="#d820f0" stroke-width="1"/><ellipse cx="577.0" cy="452.0" rx="23.5" ry="16.5" fill="none" stroke="#d820f0" stroke-width="1"/><ellipse cx="579.0" cy="454.0" rx="7.0" ry="6.0" fill="none" stroke="#d820f0" stroke-width="1"/><path d="M82.6,165.9 Q61.8,170.7 60.8,183.9 Q61.8,199.1 78.8,204.8 Q105.3,214.2 128.1,255.0" fill="none" stroke="#d820f0" stroke-width="1"/><ellipse cx="81.7" cy="180.2" rx="7.0" ry="7.0" fill="none" stroke="#d820f0" stroke-width="1"/><polyline points="71.3,172.6 71.3,197.2" fill="none" stroke="#d820f0" stroke-width="1"/><polyline points="86.4,165.0 86.4,185.8" fill="none" stroke="#d820f0" stroke-width="1"/><polyline points="98.7,165.0 98.7,178.3" fill="none" stroke="#d820f0" stroke-width="1"/><polyline points="86.4,167.8 93.0,182.0 135.7,165.0" fill="none" stroke="#1818e0" stroke-width="1"/><polyline points="82.6,165.9 98.7,165.9" fill="none" stroke="#d820f0" stroke-width="1"/><path d="M90.2,183.9 Q111.0,199.1 124.3,219.9" fill="none" stroke="#d820f0" stroke-width="1"/><polyline points="124.3,219.9 124.3,244.5" fill="none" stroke="#d820f0" stroke-width="1"/><polyline points="126.6,250.0 193.5,370.0 223.6,425.0 237.0,453.0" fill="none" stroke="#d820f0" stroke-width="1"/><polyline points="99.5,177.6 141.1,250.0 208.7,370.0 236.8,425.0 252.0,453.0" fill="none" stroke="#d820f0" stroke-width="1.2"/><polyline points="103.9,165.3 150.6,250.0 218.8,370.0 249.1,425.0 265.0,453.0" fill="none" stroke="#d820f0" stroke-width="1"/><ellipse cx="82.5" cy="180.0" rx="7.0" ry="7.0" fill="none" stroke="#d820f0" stroke-width="1"/><path d="M258.1,440.0 Q263.8,449.4 276.9,449.4" fill="none" stroke="#d820f0" stroke-width="1"/><polyline points="276.9,449.4 350.0,421.3" fill="none" stroke="#d820f0" stroke-width="1"/><polyline points="229.1,408.1 229.1,453.1" fill="none" stroke="#d820f0" stroke-width="1"/><path d="M238.4,423.1 Q240.3,438.1 240.3,453.1" fill="none" stroke="#d820f0" stroke-width="1"/><polyline points="259.6,442.8 259.6,453.1" fill="none" stroke="#d820f0" stroke-width="1"/><ellipse cx="275.9" cy="423.1" rx="18.8" ry="15.0" fill="none" stroke="#d820f0" stroke-width="1"/><ellipse cx="276.5" cy="431.6" rx="8.4" ry="7.9" fill="none" stroke="#d820f0" stroke-width="1"/><ellipse cx="276.5" cy="430.6" rx="7.1" ry="6.6" fill="none" stroke="#d820f0" stroke-width="1"/><polyline points="280.6,447.5 280.6,453.1" fill="none" stroke="#d820f0" stroke-width="1"/><ellipse cx="264.8" cy="207.4" rx="18.9" ry="16.0" fill="none" stroke="#d820f0" stroke-width="1"/><ellipse cx="265.1" cy="215.7" rx="9.0" ry="8.5" fill="none" stroke="#d820f0" stroke-width="1"/><ellipse cx="265.1" cy="215.2" rx="8.0" ry="7.3" fill="none" stroke="#d820f0" stroke-width="1"/><polyline points="330.0,429.1 472.5,370.0" fill="none" stroke="#d820f0" stroke-width="1"/><path d="M312.7,453.7 Q328,440 350,429.1 L486,383.5" fill="none" stroke="#d820f0" stroke-width="1"/><polyline points="319.0,452.6 490.0,383.0" fill="none" stroke="#d820f0" stroke-width="1"/><path d="M358.1,453.4 Q420.0,426.3 480.0,413.1" fill="none" stroke="#d820f0" stroke-width="1"/><polyline points="362.8,423.4 412.5,405.6" fill="none" stroke="#d820f0" stroke-width="1"/><polyline points="365.6,434.7 415.3,415.9" fill="none" stroke="#d820f0" stroke-width="1"/><path d="M362.8,423.4 Q360.0,430.0 365.6,434.7" fill="none" stroke="#d820f0" stroke-width="1"/><path d="M412.5,405.6 Q418.1,410.3 415.3,415.9" fill="none" stroke="#d820f0" stroke-width="1"/><polyline points="363.8,426.3 412.5,408.4" fill="none" stroke="#d820f0" stroke-width="1"/><polyline points="360.9,425.3 360.9,453.4" fill="none" stroke="#d820f0" stroke-width="1"/><polyline points="420.9,400.0 420.9,428.1" fill="none" stroke="#d820f0" stroke-width="1"/><polyline points="425.2,390.0 490.0,363.4" fill="none" stroke="#d820f0" stroke-width="1"/><ellipse cx="455.0" cy="350.6" rx="20.1" ry="16.5" fill="none" stroke="#d820f0" stroke-width="1"/><ellipse cx="455.0" cy="358.7" rx="9.1" ry="8.5" fill="none" stroke="#d820f0" stroke-width="1"/><ellipse cx="455.0" cy="359.3" rx="7.6" ry="7.2" fill="none" stroke="#d820f0" stroke-width="1"/><polyline points="78.4,434.1 66.5,438.4" fill="none" stroke="#30e030" stroke-width="1.3"/><polyline points="64.0,437.0 66.0,439.5 68.0,437.0 66.0,439.5 66.0,442.0" fill="none" stroke="#30e030" stroke-width="0.8"/><polyline points="78.4,434.1 85.5,445.0" fill="none" stroke="#e03030" stroke-width="1.3"/><polyline points="84.0,443.0 88.0,447.0" fill="none" stroke="#a02020" stroke-width="0.8"/><polyline points="88.0,443.0 84.0,447.0" fill="none" stroke="#a02020" stroke-width="0.8"/><polyline points="78.4,434.1 79.0,440.0" fill="none" stroke="#2040e0" stroke-width="1.2"/><polyline points="78.0,440.0 81.0,440.0 78.0,443.0 81.0,443.0" fill="none" stroke="#2040e0" stroke-width="0.8"/></g><polyline points="40.0,120.0 222.0,45.0" fill="none" stroke="#f88878" stroke-width="1.3"/><polyline points="390.6,45.0 581.0,397.0 447.0,453.0" fill="none" stroke="#f88878" stroke-width="1.3"/><polyline points="50.0,150.0 215.0,453.0" fill="none" stroke="#f88878" stroke-width="1.3"/></g></svg>
</body></html>
